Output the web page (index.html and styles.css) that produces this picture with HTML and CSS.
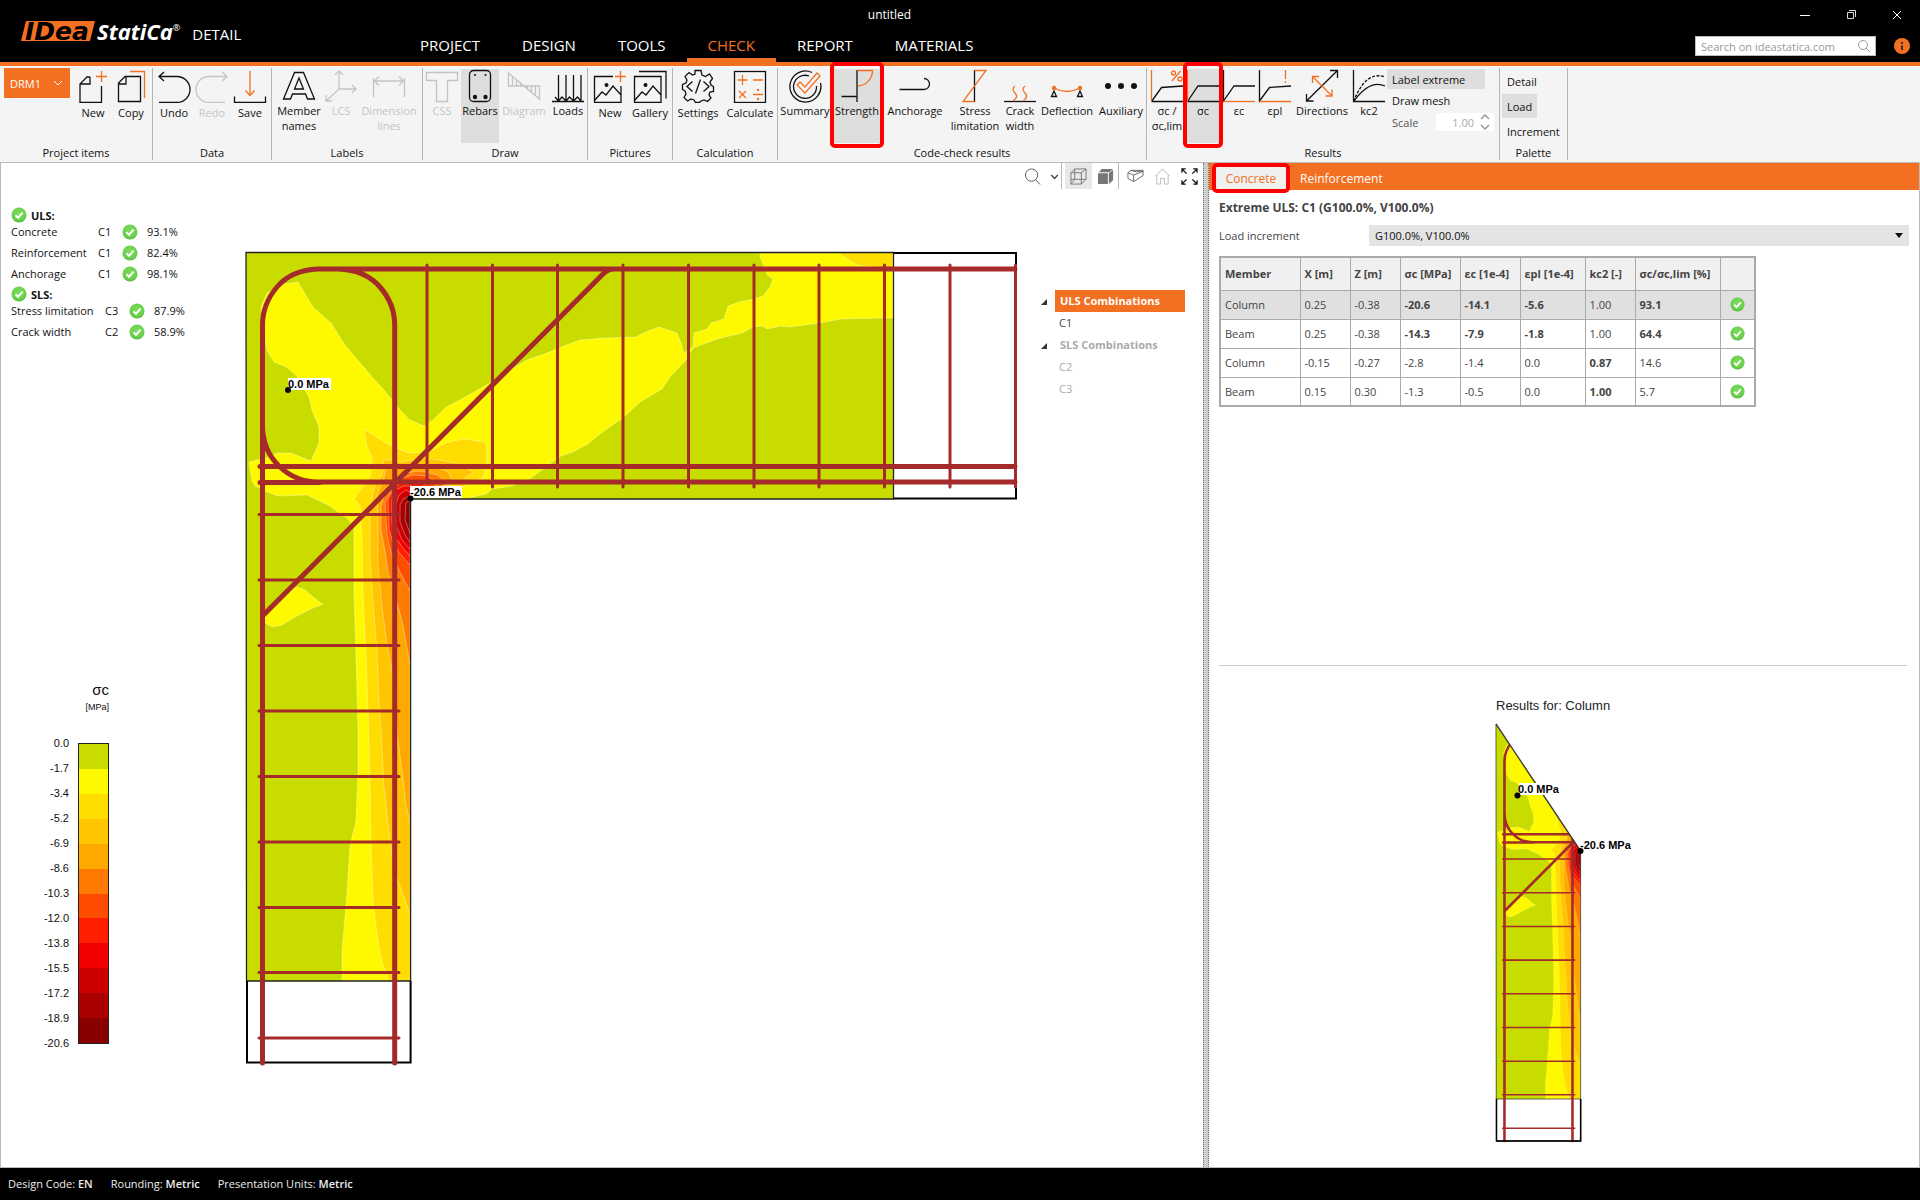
FILE: index.html
```html
<!DOCTYPE html>
<html lang="en">
<head>
<meta charset="utf-8">
<title>untitled - IDEA StatiCa Detail</title>
<link rel="stylesheet" href="styles.css">
</head>
<body class="app">

<svg class="defs" aria-hidden="true">
  <defs>
    <radialGradient id="okFill" cx="50%" cy="40%" r="60%">
      <stop offset="0" stop-color="#7ddc5e"/><stop offset="0.75" stop-color="#6bd04c"/><stop offset="1" stop-color="#4fb83a"/>
    </radialGradient>
    <symbol id="ok" viewBox="0 0 16 16">
      <circle cx="8" cy="8" r="7.5" fill="url(#okFill)"/>
      <path d="M4.5 8.3 7 10.8 11.6 5.6" fill="none" stroke="#fff" stroke-width="2"/>
    </symbol>
    <clipPath id="columnClip"><path d="M244 249 410.600 499H413V1066H244Z"/></clipPath>
    <g id="model">
      <path d="M246 252H893V499H410.600V981H246Z" fill="#c8dc00"/>
      <g stroke="#ffffff" stroke-opacity=".35" stroke-width="1">
        <path fill="#fff900" d="M298 282 313 307 331 323 345 345 373 378 384 390 400 410 410 420 424 426 433 420 445 408 465 397 492 382 510 370 527 360 547 353 561 347 580 340 604 338 636 337 643 333 659 327 677 333 681 343 684 353 693 347 694 333 707 329 711 323 724 319 728 306 739 302 754 299 763 296 770 287 773 279 767 275 764 266 760 257V252H893V318L881 318 841 319 819 323 790 327 780 326 767 329 762 326 753 327 742 333 717 339 693 348 686 360 670 377 662 389 640 402 624 417 611 426 600 434 588 444 573 452 561 456 551 463 531 478 512 486 492 489 486 494 463 499H410V981H342V951L346 905 348 878 350 845 356 821 358 771 358 729 356 656 354 595 354 526 347 518 328 505 307 495 278 496 267 492 255 486 252 481 249 462 269 457 277 453 291 453 311 461 319 443 319 427 312 410 309 397 304 388 296 375 286 367 274 362 267 350 264 333 261 307 267 293 282 284Z"/>
        <path fill="#fff900" d="M265 623 272 627 282 625 297 616 313 608 323 604 318 601 305 590 297 587 289 589 265 613Z"/>
        <path fill="#ffdd00" d="M837 252 857 265 873 267 884 270 893 272V252Z"/>
        <path fill="#ffdd00" d="M364 429 384 442 408 453 429 452 445 443 463 439 486 442 487 465 483 477 463 487 410 499V981H389L382 962 377 935 373 901 371 847 370 778 368 710 366 656 363 595 362 537 360 505 354 499 363 486 370 477 372 457 367 447Z"/>
        <path fill="#ffc500" d="M384 459 400 462 425 458 457 463 473 472 460 482 410 499V914L397 878 392 855 388 824 384 786 382 748 379 702 377 652 373 602 370 556 370 507 375 485 382 475Z"/>
        <path fill="#ffa800" d="M386 468 400 468 430 464 448 472 453 482 410 499V822L406 805 402 771 397 733 392 671 387 644 382 606 378 564 378 518 377 495 384 478Z"/>
        <path fill="#ff7a00" d="M392 480 406 473 420 471 438 475 447 484 410 499V664L403 625 395 595 388 572 385 551 381 530 381 507 386 490Z"/>
        <path fill="#ff4d00" d="M393 486 402 478 413 475 428 476 438 484 410 499V591L400 572 391 553 387 534 385 503Z"/>
        <path fill="#ff1e00" d="M394 488 402 482 413 480 425 484 410 499V565L402 556 394 545 389 530 388 500Z"/>
        <path fill="#f20000" d="M396 490 404 486 412 486 410 499V556L403 548 396 538 392 522 392 500Z"/>
        <path fill="#cc0000" d="M399 495 406 490 410 492V549L402 540 396 525 396 505Z"/>
        <path fill="#aa0000" d="M403 499 410 496V542L405 535 400 522 400 505Z"/>
        <path fill="#880000" d="M406 503 410 500V533L405 520Z"/>
      </g>
      <path d="M246 252.500H893.500V499H410.600V981H246.500Z" fill="none" stroke="#222" stroke-width="1.300"/>
      <path d="M893.500 253H1016V498.500H893.500M247 981V1062.500H410.600V981" fill="none" stroke="#000" stroke-width="2"/>
      <g fill="none" stroke="#a52a2a" stroke-linecap="round">
        <path stroke-width="5" d="M262.500 1063V325Q262.500 304 277 287T318 269H1015M262.500 425Q262.500 450 279 466T318 482H1015M260 466.500H1015M260 482.500H320M394.700 1063V325Q394.700 304 380 287T338 269M262.500 616 603 274Q608 269 614 269"/>
        <path stroke-width="3" d="M427 265V483M492.500 265V487M557.500 265V487M623 265V487M688.500 265V487M754 265V487M819 265V487M884.500 265V487M950 265V487M1015.500 265V487M259 514.500H399M259 580H399M259 645.500H399M259 711H399M259 776.500H399M259 842H399M259 907.500H399M259 972.500H399M259 1038H399"/>
      </g>
    </g>

    <symbol id="i-new" viewBox="0 0 34 34"><path d="M14 8h-3L4 15v18.500h21.500V17M14 8v7H4" class="k"/><path d="M25.500 2v11M20 7.500h11" class="o"/></symbol>
    <symbol id="i-copy" viewBox="0 0 34 34"><path d="M11 7.500h15.500v25h-22V14ZM12 8v7H5" class="k"/><path d="M16 2.500h14.500V29" class="o"/></symbol>
    <symbol id="i-undo" viewBox="0 0 34 34"><path d="M2 7.500h18a12.700 12.700 0 0 1 0 26H2M7 3 2 7.500 7 12" class="k"/></symbol>
    <symbol id="i-redo" viewBox="0 0 34 34"><path d="M32 7.500H14a12.700 12.700 0 0 0 0 26h16M27 3l5 4.500-5 4.500" class="k"/></symbol>
    <symbol id="i-save" viewBox="0 0 34 34"><path d="M1.500 27.500v6h31v-6" class="k"/><path d="M17 2v24M12.500 21.500 17 26.500l4.500-5" class="o"/></symbol>
    <symbol id="i-member" viewBox="0 0 34 34"><path d="M1.500 30 12.500 3.500h9L32.500 30h-7l-2-5h-13l-2 5ZM12.500 20h9L17 9Z" class="k"/></symbol>
    <symbol id="i-lcs" viewBox="0 0 34 34"><path d="M15 2v18L2 32M15 20h17M11 6l4-4 4 4M28 16l4 4-4 4M2 26v6h6" class="k"/></symbol>
    <symbol id="i-dim" viewBox="0 0 34 34"><path d="M1.500 9v19M32.500 9v19M2 12h30M7 7.500 2.500 12 7 16.500M27 7.500l4.500 4.500-4.500 4.500" class="k"/></symbol>
    <symbol id="i-css" viewBox="0 0 34 34"><path d="M1.500 3.500h31v8h-10v21h-11v-21h-10Z" class="k"/></symbol>
    <symbol id="i-rebars" viewBox="0 0 34 34"><rect x="6.500" y="1.500" width="21" height="31" rx="4" class="k"/><circle cx="12" cy="28" r="2.200" class="f"/><circle cx="22.500" cy="28" r="2.200" class="f"/><circle cx="12" cy="6" r="1" class="f"/><circle cx="22.500" cy="6" r="1" class="f"/></symbol>
    <symbol id="i-diagram" viewBox="0 0 34 34"><path d="M1.500 4v13h31v13ZM5.500 7.500V17M9.500 11v6M13.500 14v3M20.500 17v3M24.500 17v6M28.500 17v9" class="k"/></symbol>
    <symbol id="i-loads" viewBox="0 0 34 34"><path d="M1 32.500h32M7.500 6v26M15 6v26M22.500 6v26M30 6v26M4 28l3.500 4 3.500-4 4 4 3.500-4 4 4 4-4 3.500 4" class="k"/></symbol>
    <symbol id="i-pic" viewBox="0 0 34 34"><path d="M20 7.500H1.500v26H28V17M2 31l7-8 4 3 7-9 8 9" class="k"/><circle cx="13.500" cy="16" r="2" class="f"/><path d="M27.500 2v11M22 7.500h11" class="o"/></symbol>
    <symbol id="i-gallery" viewBox="0 0 34 34"><path d="M1.500 7.500H28v26H1.500ZM6 2.500h27v27M2 31l7-8 4 3 7-9 8 9" class="k"/><circle cx="12.500" cy="16" r="2" class="f"/></symbol>
    <symbol id="i-settings" viewBox="0 0 34 34"><path d="m14 1.500 6 0 1 4.500 3.500 1.500L28.500 5l3 4.500L29 13l1 3 2.500 1.500v5L29 23l-1 3 2 3-3.500 3.500L23 31l-3 1-1.500 1.500h-4L13 31l-3-1-3.500 2L3 28.500 5 25l-1-3-2.500-1.500v-5L5 14l1-3-2-3.500 4-4L11.500 6 14 5Z" class="k"/><path d="m11.500 12.500-5.500 5 5.500 5M22.500 12.500l5.500 5-5.500 5M19.500 10.500l-5 14" class="k"/></symbol>
    <symbol id="i-calc" viewBox="0 0 34 34"><rect x="1.500" y="2.500" width="31" height="31" class="k"/><path d="M9.500 6v10M4.500 11h10M20 11h10M6 22l7 7M13 22l-7 7M20 25.500h10" class="o"/><circle cx="25" cy="21" r="1.200" class="fo"/><circle cx="25" cy="30" r="1.200" class="fo"/></symbol>
    <symbol id="i-summary" viewBox="0 0 34 34"><path d="M24 3.500A15.500 15.500 0 1 0 32.500 14M21 7A11.500 11.500 0 1 0 28.500 17" class="k"/><path d="m9 16 3-3 5 5L29 4l3 3-15 17Z" class="o"/></symbol>
    <symbol id="i-strength" viewBox="0 0 34 34"><path d="M17 1v32M1.500 27.500H17" class="k"/><path d="M17.500 1.500h15A15.500 15.500 0 0 1 18 17" class="o"/></symbol>
    <symbol id="i-anchor" viewBox="0 0 34 34"><path d="M1.500 20.500h24.500a5.500 5.500 0 0 0 0-11" class="k"/></symbol>
    <symbol id="i-stress" viewBox="0 0 34 34"><path d="M16.500 1v32" class="k"/><path d="M16.500 1.500H28L5 32.500h11.500" class="o"/></symbol>
    <symbol id="i-crack" viewBox="0 0 34 34"><path d="M1 32.500h32" class="k"/><path d="M12 17q-4 3 0 7t-2 8M22 17q-4 3 0 7t-2 8" class="o"/></symbol>
    <symbol id="i-deflect" viewBox="0 0 34 34"><path d="m4 22-2.500 5.500h5ZM30 22l-2.500 5.500h5Z" class="k"/><path d="M4 19q13 7 26 0" class="o"/><circle cx="4" cy="19" r="2.200" class="fo"/><circle cx="30" cy="19" r="2.200" class="fo"/></symbol>
    <symbol id="i-aux" viewBox="0 0 34 34"><circle cx="4" cy="17" r="3" class="f"/><circle cx="17" cy="17" r="3" class="f"/><circle cx="30" cy="17" r="3" class="f"/></symbol>
    <symbol id="i-ratio" viewBox="0 0 34 34"><path d="M1.500 32.500H33M1.500 32.500 11.500 18.500 33 17" class="k"/><path d="M1.500 1v31M30.500 2 22 12" class="o"/><circle cx="23.500" cy="4" r="2" class="o"/><circle cx="30" cy="10" r="2" class="o"/></symbol>
    <symbol id="i-sigma" viewBox="0 0 34 34"><path d="M1.500 32.500H33M1.500 32.500 12 17H33" class="k"/><path d="M1.500 1v31" class="o"/></symbol>
    <symbol id="i-eps" viewBox="0 0 34 34"><path d="M1.500 1v31L12 17H33" class="k"/><path d="M1.500 32.500H33" class="o"/></symbol>
    <symbol id="i-epl" viewBox="0 0 34 34"><path d="M1.500 1v31L11.500 18.500 33 17" class="k"/><path d="M1.500 32.500H33M27.500 1v9M27.500 12v2" class="o"/></symbol>
    <symbol id="i-dir" viewBox="0 0 34 34"><path d="M1.500 32 32.500 1.500M25 1.500h7.500V9M1.500 25v7h7" class="k"/><path d="m7.500 7.500 19 19M7.500 14V7.500H14M27 20.500v6.500h-6.500" class="o"/></symbol>
    <symbol id="i-kc2" viewBox="0 0 34 34"><path d="M1.500 1v31.500H33M1.500 32.500Q18 10 33 17" class="k"/><path d="M1.500 32.500Q14 1 33 8" class="k" stroke-dasharray="3 1.500"/></symbol>
  </defs>
</svg>

<header class="topbar">
  <div class="brand">
    <svg class="brand-mark" width="76" height="30" viewBox="0 -4 76 30" role="img" aria-label="IDEA">
      <path d="M6 1h69l-5 20H1Z" fill="#f36f21"/>
      <text x="5" y="20" class="brand-idea">IDea</text>
    </svg>
    <span class="brand-name">StatiCa<sup>®</sup></span>
    <span class="brand-app">DETAIL</span>
  </div>
  <h1 class="doc-title">untitled</h1>
  <div class="window-buttons">
    <button type="button" aria-label="Minimize"><svg width="12" height="12"><path d="M1 6.500h10" stroke="#fff"/></svg></button>
    <button type="button" aria-label="Restore"><svg width="12" height="12" fill="none" stroke="#ddd"><path d="M2.500 3.500h6v6h-6ZM4 1.500h6.500V8"/></svg></button>
    <button type="button" aria-label="Close"><svg width="12" height="12"><path d="m2 2 8 8M10 2l-8 8" stroke="#fff"/></svg></button>
  </div>
  <nav class="menu">
    <a href="#project">PROJECT</a><a href="#design">DESIGN</a><a href="#tools">TOOLS</a><a href="#check" class="is-active">CHECK</a><a href="#report">REPORT</a><a href="#materials">MATERIALS</a>
  </nav>
  <form class="search">
    <label class="search-box">
      <input type="text" placeholder="Search on ideastatica.com" aria-label="Search">
      <svg width="14" height="14" fill="none" stroke="#999"><circle cx="6" cy="6" r="4.500"/><path d="m9 9 4 4"/></svg>
    </label>
    <button type="button" class="info" aria-label="Information"><svg width="16" height="16"><circle cx="8" cy="8" r="8" fill="#f36f21"/><path d="M8 4v2M8 7.500V12" stroke="#333" stroke-width="2"/></svg></button>
  </form>
</header>

<section class="ribbon">
  <div class="group">
    <div class="tools tools-low tools-pad4">
      <button type="button" class="item-menu">DRM1 <svg width="10" height="6" fill="none" stroke="#fff"><path d="m1 1 4 4 4-4"/></svg></button>
      <button type="button" class="tool w38"><svg><use href="#i-new"/></svg><span>New</span></button>
      <button type="button" class="tool w38"><svg><use href="#i-copy"/></svg><span>Copy</span></button>
    </div>
    <h2>Project items</h2>
  </div>
  <div class="group">
    <div class="tools tools-low tools-pad2">
      <button type="button" class="tool w38"><svg><use href="#i-undo"/></svg><span>Undo</span></button>
      <button type="button" class="tool w38" disabled><svg><use href="#i-redo"/></svg><span>Redo</span></button>
      <button type="button" class="tool w38"><svg><use href="#i-save"/></svg><span>Save</span></button>
    </div>
    <h2>Data</h2>
  </div>
  <div class="group">
    <div class="tools">
      <button type="button" class="tool w54"><svg><use href="#i-member"/></svg><span>Member<br>names</span></button>
      <button type="button" class="tool w30" disabled><svg><use href="#i-lcs"/></svg><span>LCS</span></button>
      <button type="button" class="tool w66" disabled><svg><use href="#i-dim"/></svg><span>Dimension<br>lines</span></button>
    </div>
    <h2>Labels</h2>
  </div>
  <div class="group">
    <div class="tools">
      <button type="button" class="tool w38" disabled><svg><use href="#i-css"/></svg><span>CSS</span></button>
      <button type="button" class="tool w38 is-on"><svg><use href="#i-rebars"/></svg><span>Rebars</span></button>
      <button type="button" class="tool w50" disabled><svg><use href="#i-diagram"/></svg><span>Diagram</span></button>
      <button type="button" class="tool w38"><svg><use href="#i-loads"/></svg><span>Loads</span></button>
    </div>
    <h2>Draw</h2>
  </div>
  <div class="group">
    <div class="tools tools-low tools-pad2">
      <button type="button" class="tool w40"><svg><use href="#i-pic"/></svg><span>New</span></button>
      <button type="button" class="tool w40"><svg><use href="#i-gallery"/></svg><span>Gallery</span></button>
    </div>
    <h2>Pictures</h2>
  </div>
  <div class="group">
    <div class="tools tools-low">
      <button type="button" class="tool w50"><svg><use href="#i-settings"/></svg><span>Settings</span></button>
      <button type="button" class="tool w54"><svg><use href="#i-calc"/></svg><span>Calculate</span></button>
    </div>
    <h2>Calculation</h2>
  </div>
  <div class="group">
    <div class="tools">
      <button type="button" class="tool w54"><svg><use href="#i-summary"/></svg><span>Summary</span></button>
      <button type="button" class="tool w50 is-on is-marked"><svg><use href="#i-strength"/></svg><span>Strength</span></button>
      <button type="button" class="tool w66"><svg><use href="#i-anchor"/></svg><span>Anchorage</span></button>
      <button type="button" class="tool w54"><svg><use href="#i-stress"/></svg><span>Stress<br>limitation</span></button>
      <button type="button" class="tool w36"><svg><use href="#i-crack"/></svg><span>Crack<br>width</span></button>
      <button type="button" class="tool w58"><svg><use href="#i-deflect"/></svg><span>Deflection</span></button>
      <button type="button" class="tool w50"><svg><use href="#i-aux"/></svg><span>Auxiliary</span></button>
    </div>
    <h2>Code-check results</h2>
  </div>
  <div class="group">
    <div class="tools tools-pad2">
      <button type="button" class="tool w36"><svg><use href="#i-ratio"/></svg><span>σc /<br>σc,lim</span></button>
      <button type="button" class="tool w36 is-on is-marked"><svg><use href="#i-sigma"/></svg><span>σc</span></button>
      <button type="button" class="tool w36"><svg><use href="#i-eps"/></svg><span>εc</span></button>
      <button type="button" class="tool w36"><svg><use href="#i-epl"/></svg><span>εpl</span></button>
      <button type="button" class="tool w58"><svg><use href="#i-dir"/></svg><span>Directions</span></button>
      <button type="button" class="tool w36"><svg><use href="#i-kc2"/></svg><span>kc2</span></button>
      <div class="stack stack-wide">
        <button type="button" class="line-button is-on">Label extreme</button>
        <button type="button" class="line-button">Draw mesh</button>
        <label class="scale">Scale <span class="spinner"><input type="text" value="1.00"><svg width="10" height="16" fill="none" stroke="#999" stroke-width="1.500"><path d="m1 5 4-4 4 4M1 11l4 4 4-4"/></svg></span></label>
      </div>
    </div>
    <h2>Results</h2>
  </div>
  <div class="group">
    <div class="tools tools-pad2">
      <div class="stack stack-even">
        <button type="button" class="line-button">Detail</button>
        <button type="button" class="line-button is-on">Load</button>
        <button type="button" class="line-button">Increment</button>
      </div>
    </div>
    <h2>Palette</h2>
  </div>
</section>

<main class="workspace">
  <section class="scene">
    <div class="scene-tools">
      <button type="button" aria-label="Zoom"><svg viewBox="0 0 18 18" fill="none" stroke="#555"><circle cx="8" cy="7.500" r="6.500"/><path d="m12.500 12.500 4.500 5"/></svg></button>
      <button type="button" class="narrow" aria-label="Zoom options"><svg viewBox="0 0 18 18" fill="none" stroke="#444" stroke-width="1.500"><path d="m5.500 7.500 3.500 3.500 3.500-3.500"/></svg></button>
      <button type="button" class="is-on ruled" aria-label="Wireframe"><svg viewBox="0 0 18 18" fill="none" stroke="#777"><path d="M1 5h11v12H1ZM1 5l4-4h12l-5 4M17 1v11l-5 5M5 1v11H1M5 12h12M1 17l4-5"/></svg></button>
      <button type="button" aria-label="Solid"><svg viewBox="0 0 18 18" fill="#777"><path d="M1 5.500h10.500V17H1ZM2 4.500 5 1h12l-4 3.500ZM12.500 5.500 17 2v11l-4.500 4Z"/></svg></button>
      <button type="button" class="ruled" aria-label="Perspective"><svg viewBox="0 0 18 18" fill="none" stroke="#666"><path d="M1 5 4 2.500H17V8L7 14.500 1 11ZM1 5l6 2.500L17 3.500M7 7.500v7M4 2.500l6 1.500 7-1"/></svg></button>
      <button type="button" aria-label="Home view"><svg viewBox="0 0 18 18" fill="none" stroke="#bbb"><path d="m1 9 8-8 8 8M3 7.500V17h4v-6h4v6h4V7.500"/></svg></button>
      <button type="button" aria-label="Fit all"><svg viewBox="0 0 18 18" fill="none" stroke="#111" stroke-width="1.300"><path d="M1 5V1h4M13 1h4v4M17 13v4h-4M5 17H1v-4M1 1l5 5M17 1l-5 5M17 17l-5-5M1 17l5-5"/></svg></button>
    </div>

    <div class="scene-left">
      <div class="checks">
        <h3><svg><use href="#ok"/></svg>ULS:</h3>
        <dl class="check-rows">
          <dt>Concrete</dt><dd>C1</dd><dd><svg><use href="#ok"/></svg></dd><dd>93.1%</dd>
          <dt>Reinforcement</dt><dd>C1</dd><dd><svg><use href="#ok"/></svg></dd><dd>82.4%</dd>
          <dt>Anchorage</dt><dd>C1</dd><dd><svg><use href="#ok"/></svg></dd><dd>98.1%</dd>
        </dl>
        <h3><svg><use href="#ok"/></svg>SLS:</h3>
        <dl class="check-rows check-rows-wide">
          <dt>Stress limitation</dt><dd>C3</dd><dd><svg><use href="#ok"/></svg></dd><dd>87.9%</dd>
          <dt>Crack width</dt><dd>C2</dd><dd><svg><use href="#ok"/></svg></dd><dd>58.9%</dd>
        </dl>
      </div>
      <div class="legend">
        <p class="legend-title">σc</p>
        <p class="legend-unit">[MPa]</p>
        <div class="legend-scale">
          <ol class="legend-values"><li>0.0</li><li>-1.7</li><li>-3.4</li><li>-5.2</li><li>-6.9</li><li>-8.6</li><li>-10.3</li><li>-12.0</li><li>-13.8</li><li>-15.5</li><li>-17.2</li><li>-18.9</li><li>-20.6</li></ol>
          <div class="legend-bar"><i class="c1"></i><i class="c2"></i><i class="c3"></i><i class="c4"></i><i class="c5"></i><i class="c6"></i><i class="c7"></i><i class="c8"></i><i class="c9"></i><i class="c10"></i><i class="c11"></i><i class="c12"></i></div>
        </div>
      </div>
    </div>

    <svg class="drawing" viewBox="231 190 807 976" preserveAspectRatio="xMidYMin meet" role="img" aria-label="Concrete stress in the frame corner">
      <use href="#model"/>
      <g class="value-tag">
        <rect x="288" y="378" width="43" height="12" fill="#fff"/><circle cx="288" cy="390" r="3"/><text x="288" y="388">0.0 MPa</text>
        <rect x="410" y="486" width="52" height="12" fill="#fff"/><circle cx="410.500" cy="498.500" r="3"/><text x="410" y="496">-20.6 MPa</text>
      </g>
    </svg>

    <ul class="tree">
      <li><details open><summary class="is-selected">ULS Combinations</summary><ul><li>C1</li></ul></details></li>
      <li><details open class="is-off"><summary>SLS Combinations</summary><ul><li>C2</li><li>C3</li></ul></details></li>
    </ul>
  </section>

  <div class="splitter"></div>

  <aside class="panel">
    <div class="tabs">
      <button type="button" class="tab is-active">Concrete</button>
      <button type="button" class="tab">Reinforcement</button>
    </div>
    <div class="panel-body">
      <h3>Extreme ULS: C1 (G100.0%, V100.0%)</h3>
      <div class="increment">
        <label for="increment">Load increment</label>
        <span class="select"><select id="increment"><option>G100.0%, V100.0%</option></select></span>
      </div>
      <table class="results">
        <colgroup><col class="cw80"><col class="cw50"><col class="cw50"><col class="cw60"><col class="cw60"><col class="cw65"><col class="cw50"><col class="cw85"><col class="cw35"></colgroup>
        <thead><tr><th>Member</th><th>X [m]</th><th>Z [m]</th><th>σc [MPa]</th><th>εc [1e-4]</th><th>εpl [1e-4]</th><th>kc2 [-]</th><th>σc/σc,lim [%]</th><th></th></tr></thead>
        <tbody>
          <tr class="is-selected"><td>Column</td><td>0.25</td><td>-0.38</td><td><b>-20.6</b></td><td><b>-14.1</b></td><td><b>-5.6</b></td><td>1.00</td><td><b>93.1</b></td><td><svg><use href="#ok"/></svg></td></tr>
          <tr><td>Beam</td><td>0.25</td><td>-0.38</td><td><b>-14.3</b></td><td><b>-7.9</b></td><td><b>-1.8</b></td><td>1.00</td><td><b>64.4</b></td><td><svg><use href="#ok"/></svg></td></tr>
          <tr><td>Column</td><td>-0.15</td><td>-0.27</td><td>-2.8</td><td>-1.4</td><td>0.0</td><td><b>0.87</b></td><td>14.6</td><td><svg><use href="#ok"/></svg></td></tr>
          <tr><td>Beam</td><td>0.15</td><td>0.30</td><td>-1.3</td><td>-0.5</td><td>0.0</td><td><b>1.00</b></td><td>5.7</td><td><svg><use href="#ok"/></svg></td></tr>
        </tbody>
      </table>
    </div>
    <figure class="detail">
      <svg width="160" height="460" viewBox="1485 690 160 460" role="img" aria-label="Results for the column">
        <text x="1496" y="710" class="detail-title">Results for: Column</text>
        <g transform="translate(1369.400 594.300) scale(.5145)">
          <g clip-path="url(#columnClip)"><use href="#model"/></g>
          <path d="M246 252 410.600 499" stroke="#333" stroke-width="2.500"/>
          <path d="M247 981V1062.500H410.600V981" fill="none" stroke="#000" stroke-width="3"/>
        </g>
        <g class="value-tag">
          <rect x="1519" y="783" width="40" height="12" fill="#fff"/><circle cx="1517.500" cy="795.500" r="3"/><text x="1518" y="793">0.0 MPa</text>
          <circle cx="1580.500" cy="851" r="3"/><text x="1580" y="849">-20.6 MPa</text>
        </g>
      </svg>
    </figure>
  </aside>
</main>

<footer class="statusbar">
  <span>Design Code: <b>EN</b></span><span>Rounding: <b>Metric</b></span><span>Presentation Units: <b>Metric</b></span>
</footer>
</body>
</html>
```

FILE: styles.css
```css
* { box-sizing: border-box; }
body, h1, h2, h3, p, ul, ol, dl, dd, figure { margin: 0; padding: 0; }
ul, ol { list-style: none; }
button, input, select { font: inherit; color: inherit; border: 0; background: none; padding: 0; margin: 0; }

.app {
  min-height: 100vh;
  display: grid;
  grid-template-rows: auto auto 1fr auto;
  background: #fff;
  color: #111;
  font: 11px/15px "Open Sans", "Noto Sans", sans-serif;
}
.defs { position: absolute; width: 0; height: 0; }
.k { fill: none; stroke: currentColor; stroke-width: 1.3; }
.o { fill: none; stroke: #f36f21; stroke-width: 1.3; }
.f { fill: currentColor; }
.fo { fill: #f36f21; }

/* Top bar */
.topbar {
  display: grid;
  grid-template: 28px 34px / 399px 1fr 540px;
  background: #000;
  color: #fff;
  border-bottom: 4px solid #f36f21;
}
.brand { grid-row: 1 / 3; display: flex; align-items: center; padding-left: 20px; }
.brand-mark { overflow: visible; }
.brand-idea { font: italic bold 25px "DejaVu Sans", sans-serif; fill: #000; }
.brand-name { font: italic bold 22px/26px "Open Sans", sans-serif; padding-left: 1px; white-space: nowrap; }
.brand-name sup { font-size: 9px; font-weight: normal; line-height: 9px; vertical-align: 9px; }
.brand-app { font-size: 15px; line-height: 20px; padding: 6px 0 0 12px; }
.doc-title { font-size: 12px; line-height: 30px; font-weight: normal; text-align: center; }
.window-buttons { display: flex; justify-content: flex-end; gap: 34px; padding: 2px 17px 0 0; align-items: center; }
.window-buttons button { height: 12px; line-height: 12px; }
.menu { display: flex; }
.menu a { padding: 0 21px; font-size: 15px; line-height: 34px; height: 34px; color: #fff; text-decoration: none; }
.menu a.is-active { color: #f36f21; border-bottom: 4px solid #f36f21; }
.search { display: flex; justify-content: flex-end; align-items: center; gap: 18px; padding: 2px 10px 0 0; }
.search-box { display: flex; align-items: center; width: 181px; height: 20px; padding: 0 4px 0 5px; background: #fff; border: 1px solid #bbb; }
.search-box input { flex: 1; min-width: 0; outline: 0; color: #333; }
.search-box input::placeholder { color: #999; opacity: 1; }
.info { height: 16px; line-height: 16px; }

/* Ribbon */
.ribbon { display: flex; height: 97px; padding-top: 2px; background: #f4f4f4; border-bottom: 1px solid #bbb; }
.group { display: flex; flex-direction: column; height: 92px; border-right: 1px solid #b5b5b5; }
.group h2 { font-size: 11px; line-height: 15px; font-weight: normal; text-align: center; }
.tools { flex: 1; display: flex; align-items: flex-start; padding-top: 1px; }
.tools-pad2 { padding-left: 2px; padding-right: 2px; }
.tools-pad4 { padding-left: 4px; padding-right: 2px; }
.tool { position: relative; display: flex; flex-direction: column; align-items: center; height: 74px; line-height: 15px; text-align: center; white-space: nowrap; }
.tool svg { flex: none; width: 34px; height: 34px; }
.tools-low .tool svg { margin-bottom: 2px; }
.tool:disabled { color: #c4c4c4; }
.w30 { width: 30px; }
.w36 { width: 36px; }
.w38 { width: 38px; }
.w40 { width: 40px; }
.w50 { width: 50px; }
.w54 { width: 54px; }
.w58 { width: 58px; }
.w66 { width: 66px; }
.is-on { background: #dedede; }
.is-marked::after { content: ""; position: absolute; inset: -7px -2px -5px; border: 4px solid #f00; border-radius: 5px; z-index: 1; }
.item-menu { display: flex; align-items: center; justify-content: space-between; width: 66px; height: 30px; margin: -1px 4px 0 0; padding: 0 7px 0 6px; background: #f36f21; color: #fff; }
.stack { display: flex; flex-direction: column; align-items: flex-start; }
.stack-wide { width: 110px; }
.line-button { padding: 0 5px; height: 24px; text-align: left; }
.stack-wide .line-button { height: 22px; }
.stack-wide .is-on { height: 20px; width: 98px; }
.stack-even { gap: 1px; }
.scale { display: flex; align-items: center; justify-content: space-between; width: 107px; padding: 2px 0 0 5px; color: #555; }
.spinner { display: flex; align-items: center; width: 58px; height: 18px; padding-right: 4px; background: #fff; color: #aaa; }
.spinner input { width: 38px; text-align: right; margin-right: 6px; }

/* Workspace */
.workspace { display: grid; grid-template-columns: minmax(0, 1203fr) 6px minmax(0, 711fr); }
.scene { display: grid; grid-template: 27px 1fr / 230px 1fr 165px; border-left: 1px solid #bbb; }
.scene-tools { grid-column: 1 / 4; display: flex; justify-content: flex-end; }
.scene-tools button { width: 27px; height: 26px; }
.scene-tools svg { width: 17px; height: 17px; display: block; margin: 0 auto; }
.scene-tools .narrow { width: 16px; }
.scene-tools .is-on { background: #e8e8e8; }
.scene-tools .ruled { margin-left: 3px; box-shadow: -3px 0 0 #fff, -4px 0 0 #bbb; }
.scene-left { display: flex; flex-direction: column; justify-content: space-between; padding: 19px 0 111px 10px; }
.checks svg { width: 16px; height: 16px; display: block; }
.checks h3 { display: flex; align-items: center; gap: 4px; height: 12px; font-size: 11px; }
.check-rows + h3 { margin-top: 4px; }
.check-rows { display: grid; grid-template-columns: 87px 24px 25px auto; line-height: 21px; align-items: center; justify-content: start; }
.check-rows-wide { grid-template-columns: 94px 24px 25px auto; }
.legend { width: 98px; text-align: right; font-family: "Liberation Sans", sans-serif; }
.legend-title { font-size: 15px; line-height: 16px; }
.legend-unit { font-size: 9px; line-height: 18px; }
.legend-scale { display: flex; justify-content: flex-end; gap: 9px; margin-top: 15px; }
.legend-values { font-size: 11px; line-height: 25px; }
.legend-bar { width: 31px; height: 301px; margin-top: 12px; border: 1px solid #222; display: flex; flex-direction: column; }
.legend-bar i { flex: 1; }
.c1 { background: #c8dc00; }
.c2 { background: #fff900; }
.c3 { background: #ffdd00; }
.c4 { background: #ffc500; }
.c5 { background: #ffa800; }
.c6 { background: #ff7a00; }
.c7 { background: #ff4d00; }
.c8 { background: #ff1e00; }
.c9 { background: #f20000; }
.c10 { background: #cc0000; }
.c11 { background: #aa0000; }
.c12 { background: #880000; }
.drawing { width: 100%; height: 100%; min-height: 0; display: block; }
.value-tag { font: bold 11px "Liberation Sans", sans-serif; fill: #000; }
.tree { padding: 100px 18px 0 0; line-height: 22px; color: #444; }
.tree summary { position: relative; display: block; height: 22px; margin-left: 17px; padding-left: 5px; font-weight: bold; font-size: 11px; }
.tree summary::before { content: ""; position: absolute; left: -14px; top: 9px; border: 3px solid transparent; border-right-color: #333; border-bottom-color: #333; }
.tree .is-selected { background: #f36f21; color: #fff; }
.tree details li { padding-left: 21px; }
.tree .is-off { color: #aaa; }
.splitter { background: #ccc; border-left: 1px dotted #777; border-right: 1px dotted #777; }

/* Result panel */
.panel { display: grid; grid-template-rows: auto 476px 1fr; border-right: 1px solid #bbb; color: #444; }
.tabs { display: flex; height: 27px; padding: 3px 0 0 7px; background: #f36f21; }
.tab { position: relative; height: 24px; padding: 0 14px; color: #fff; font-size: 12px; }
.tab.is-active { width: 70px; padding: 0; background: #f0f0f0; color: #f36f21; }
.tab.is-active::after { content: ""; position: absolute; inset: -3px -4px; border: 4px solid #f00; border-radius: 5px; }
.panel-body { margin: 0 12px 0 10px; padding-top: 10px; border-bottom: 1px solid #ccc; }
.panel-body h3 { font-size: 12px; line-height: 15px; }
.increment { display: flex; align-items: center; margin: 10px -2px 10px 0; }
.increment label { width: 150px; }
.select { position: relative; flex: 1; }
.select select { appearance: none; width: 100%; height: 21px; padding: 0 6px; background: #e4e4e4; color: #111; }
.select::after { content: ""; position: absolute; right: 6px; top: 8px; border: 4px solid transparent; border-top: 5px solid #111; border-bottom: 0; }
.results { width: 535px; table-layout: fixed; border-collapse: collapse; border: 2px solid #aaa; }
.results th, .results td { height: 29px; padding: 0 0 0 4px; border: 1px solid #aaa; text-align: left; white-space: nowrap; }
.results th { height: 33px; background: #f0f0f0; }
.results svg { width: 15px; height: 15px; display: block; margin-left: 5px; }
.results .is-selected { background: #e0e0e0; }
.cw35 { width: 35px; }
.cw50 { width: 50px; }
.cw60 { width: 60px; }
.cw65 { width: 65px; }
.cw80 { width: 80px; }
.cw85 { width: 85px; }
.detail { display: flex; justify-content: center; align-items: flex-start; padding: 24px 0 0 2px; }
.detail-title { font: 13px "Liberation Sans", sans-serif; fill: #222; }

/* Status bar */
.statusbar { display: flex; gap: 18px; height: 33px; padding-left: 8px; line-height: 31px; background: #000; color: #eee; border-top: 1px solid #bbb; }
.statusbar b { font-weight: 600; }
```
